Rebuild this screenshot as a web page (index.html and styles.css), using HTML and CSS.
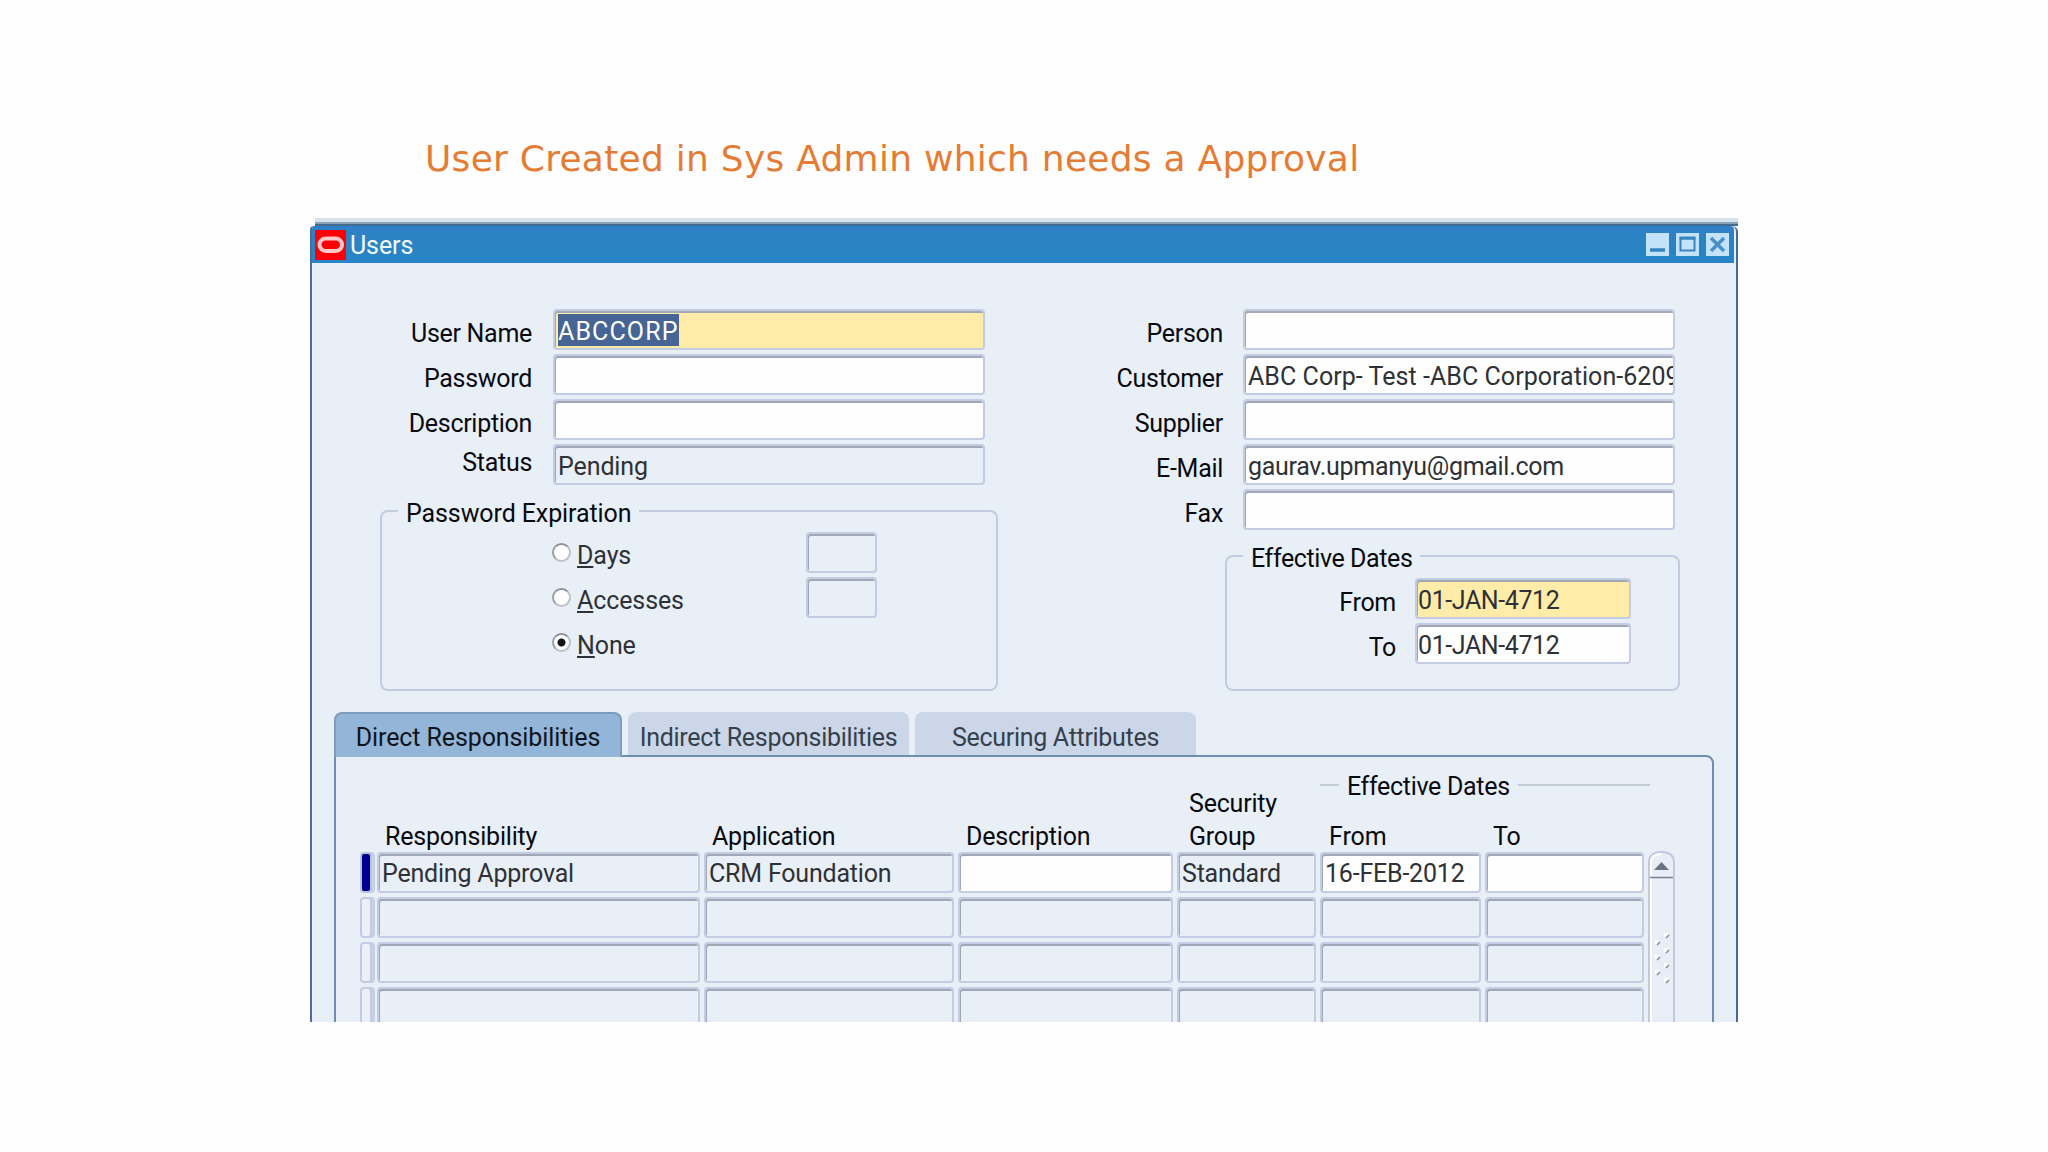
FILE: index.html
```html
<!DOCTYPE html>
<html lang="en">
<head>
    <meta charset="UTF-8">
    <meta name="viewport" content="width=device-width, initial-scale=1.0">
    <title>Users</title>
    <link rel="stylesheet" href="styles.css">
</head>
<body>

    <h1>User Created in Sys Admin which needs a Approval</h1>

    <div class="window">
        <div class="top-edge"></div>
        <div class="frame">
            <div class="title-bar">
                <svg class="logo" viewBox="0 0 31 30">
                    <rect width="31" height="30" fill="#fb0006" />
                    <rect x="4.500" y="8.500" width="22.500" height="12.500" rx="6.200" fill="none" stroke="#ffc9c9" stroke-width="4" />
                </svg>
                <span class="window-name">Users</span>
                <svg class="window-button" viewBox="0 0 23 23">
                    <rect width="23" height="23" fill="#c3e3fa" />
                    <path d="M4 17h15" stroke="#3a84bd" stroke-width="3.500" />
                </svg>
                <svg class="window-button" viewBox="0 0 23 23">
                    <rect width="23" height="23" fill="#c3e3fa" />
                    <path d="M4.500 5.500h14v12h-14z" fill="none" stroke="#3a84bd" stroke-width="2" />
                    <path d="M3.500 5h16" stroke="#3a84bd" stroke-width="3" />
                </svg>
                <svg class="window-button" viewBox="0 0 23 23">
                    <rect width="23" height="23" fill="#c3e3fa" />
                    <path d="M5 5l13 13M18 5L5 18" stroke="#4a90c8" stroke-width="3.500" />
                </svg>
            </div>

            <div class="content">
                <div class="form">
                    <div class="left-column">
                        <div class="row"><span class="label">User Name</span><div class="field required"><span class="selected">ABCCORP</span></div></div>
                        <div class="row"><span class="label">Password</span><div class="field"></div></div>
                        <div class="row"><span class="label">Description</span><div class="field"></div></div>
                        <div class="row"><span class="label status-label">Status</span><div class="field disabled">Pending</div></div>

                        <div class="group expiration">
                            <div class="legend"><span>Password Expiration</span></div>
                            <div class="option">
                                <span class="radio"></span><span class="option-name"><u>D</u>ays</span><div class="field disabled"></div>
                            </div>
                            <div class="option">
                                <span class="radio"></span><span class="option-name"><u>A</u>ccesses</span><div class="field disabled"></div>
                            </div>
                            <div class="option">
                                <span class="radio checked"></span><span class="option-name"><u>N</u>one</span>
                            </div>
                        </div>
                    </div>

                    <div class="right-column">
                        <div class="row"><span class="label">Person</span><div class="field"></div></div>
                        <div class="row"><span class="label">Customer</span><div class="field customer">ABC Corp- Test -ABC Corporation-6209</div></div>
                        <div class="row"><span class="label">Supplier</span><div class="field"></div></div>
                        <div class="row"><span class="label">E-Mail</span><div class="field email">gaurav.upmanyu@gmail.com</div></div>
                        <div class="row"><span class="label">Fax</span><div class="field"></div></div>

                        <div class="group dates">
                            <div class="legend"><span>Effective Dates</span></div>
                            <div class="row"><span class="label">From</span><div class="field required">01-JAN-4712</div></div>
                            <div class="row"><span class="label">To</span><div class="field">01-JAN-4712</div></div>
                        </div>
                    </div>
                </div>

                <div class="tabs">
                    <div class="tab active">Direct Responsibilities</div>
                    <div class="tab">Indirect Responsibilities</div>
                    <div class="tab">Securing Attributes</div>
                </div>

                <div class="panel">
                    <div class="headers">
                        <span class="header">Responsibility</span>
                        <span class="header">Application</span>
                        <span class="header">Description</span>
                        <span class="header">Security<br>Group</span>
                        <div class="header-dates">
                            <div class="dates-title">Effective Dates</div>
                            <div class="dates-names"><span>From</span><span>To</span></div>
                        </div>
                    </div>
                    <div class="table">
                        <div class="records">
                            <div class="marker current"></div>
                            <div class="field disabled">Pending Approval</div>
                            <div class="field disabled">CRM Foundation</div>
                            <div class="field"></div>
                            <div class="field disabled">Standard</div>
                            <div class="field">16-FEB-2012</div>
                            <div class="field"></div>

                            <div class="marker"></div>
                            <div class="field disabled"></div>
                            <div class="field disabled"></div>
                            <div class="field disabled"></div>
                            <div class="field disabled"></div>
                            <div class="field disabled"></div>
                            <div class="field disabled"></div>

                            <div class="marker"></div>
                            <div class="field disabled"></div>
                            <div class="field disabled"></div>
                            <div class="field disabled"></div>
                            <div class="field disabled"></div>
                            <div class="field disabled"></div>
                            <div class="field disabled"></div>

                            <div class="marker"></div>
                            <div class="field disabled"></div>
                            <div class="field disabled"></div>
                            <div class="field disabled"></div>
                            <div class="field disabled"></div>
                            <div class="field disabled"></div>
                            <div class="field disabled"></div>
                        </div>
                        <svg class="scrollbar" viewBox="0 0 27 180">
                            <path d="M1 180V12Q1 1 13.500 1T26 12V180" fill="#e9edf5" stroke="#c3c8e0" stroke-width="2" />
                            <path d="M3 180V12Q3 3 13 3" fill="none" stroke="#fff" stroke-width="2" />
                            <path d="M6 19L13.500 11L21 19z" fill="#6d7387" />
                            <path d="M2 26.500h23" stroke="#777d91" stroke-width="1.500" />
                            <g stroke="#fff" stroke-width="4">
                                <path d="M16 84h4M7 91h4M16 99h4M7 106h4M16 114h4M7 121h4M16 129h4" />
                            </g>
                            <g stroke="#858b9d" stroke-width="1.500">
                                <path d="M18 87l3-3M9 94l3-3M18 102l3-3M9 109l3-3M18 117l3-3M9 124l3-3M18 132l3-3" />
                            </g>
                        </svg>
                    </div>
                </div>
            </div>
        </div>
    </div>

</body>
</html>
```

FILE: styles.css
```css
* {
    box-sizing: border-box;
}
body {
    margin: 0;
    height: 1152px;
    overflow: hidden;
    background-color: #fefefe;
    font-family: Roboto, "Liberation Sans", sans-serif;
    font-size: 25px;
    letter-spacing: -0.1px;
    color: #080a10;
}
h1 {
    margin: 0 0 0 425px;
    padding-top: 137px;
    height: 218px;
    font-family: "DejaVu Sans", sans-serif;
    font-size: 36px;
    font-weight: normal;
    letter-spacing: 0.26px;
    line-height: 44px;
    white-space: nowrap;
    color: #e57c34;
}
.window {
    width: 1429px;
    height: 804px;
    margin-left: 309px;
    overflow: hidden;
}
.top-edge {
    height: 8px;
    margin-left: 6px;
    border-top: 4px solid #d6e3ed;
    border-bottom: 2px solid #426b91;
    background-color: #8ba3b7;
}
.frame {
    margin-left: 1px;
    border-left: 2px solid #4b6c9f;
    border-right: 2px solid #466b95;
    border-radius: 4px 6px 0 0;
    background-color: #e8eff7;
}
.title-bar {
    display: flex;
    align-items: center;
    gap: 7px;
    height: 37px;
    margin-right: 2px;
    padding: 0 5px 0 3px;
    background: linear-gradient(#2f80c8, #2b83c2 45%, #2785c8);
    border-radius: 3px 4px 0 0;
    color: #f2fbff;
}
.logo {
    width: 31px;
    height: 30px;
}
.window-name {
    flex: 1;
    margin-left: -3px;
    padding-top: 2px;
    line-height: 37px;
    letter-spacing: -0.1px;
}
.window-button {
    width: 23px;
    height: 23px;
}
.content {
    height: 759px;
    padding: 46px 23px 0 22px;
}

/* Form */
.form {
    display: flex;
    justify-content: space-between;
    height: 403px;
    padding: 0 33px 0 46px;
}
.left-column {
    width: 618px;
}
.right-column {
    width: 455px;
}
.row {
    display: flex;
    height: 45px;
}
.label {
    width: 152px;
    margin-right: 21px;
    line-height: 50px;
    letter-spacing: -0.3px;
    text-align: right;
    white-space: nowrap;
}
.left-column > .row .field {
    width: 432px;
}
.right-column > .row .label {
    margin-left: -154px;
    margin-right: 20px;
}
.right-column > .row .field {
    width: 432px;
}
.left-column .status-label {
    line-height: 37px;
}
.field {
    height: 41px;
    padding-left: 3px;
    overflow: hidden;
    border: 2px solid #c3cce3;
    border-radius: 4px;
    box-shadow: inset 1px 2px 0 #a0a8b6;
    background-color: #fefefe;
    line-height: 41px;
    white-space: nowrap;
    color: #2e3136;
}
.required {
    background-color: #feeca8;
}
.disabled {
    background-color: #e9eff7;
}
.customer {
    letter-spacing: 0.05px;
}
.email {
    letter-spacing: -0.3px;
}
.selected {
    display: inline-block;
    height: 32px;
    margin-top: 3px;
    line-height: 35px;
    letter-spacing: 1.1px;
    background-color: #466494;
    color: #fff;
    vertical-align: top;
}
.group {
    border: 2px solid #c3cbdf;
    border-radius: 8px;
}
.legend {
    height: 20px;
    padding-left: 16px;
    line-height: 29px;
}
.legend span {
    display: inline-block;
    padding: 0 8px;
    margin-top: -13px;
    background-color: #e8eff7;
    letter-spacing: -0.1px;
    vertical-align: top;
}
.expiration {
    height: 181px;
    margin-top: 21px;
}
.dates {
    height: 136px;
    margin-top: 21px;
}
.dates .legend {
    height: 21px;
}
.dates .legend span {
    letter-spacing: -0.4px;
}
.dates .label {
    width: 169px;
    margin-right: 19px;
}
.dates .field {
    width: 216px;
    padding-left: 1px;
    line-height: 42px;
    letter-spacing: -0.4px;
}
.option {
    display: flex;
    align-items: flex-start;
    height: 45px;
    padding-left: 170px;
    color: #2e3136;
}
.radio {
    width: 19px;
    height: 19px;
    margin-top: 11px;
    border: 2px solid #bcc2cc;
    border-top-color: #8c929c;
    border-left-color: #9aa0aa;
    border-radius: 50%;
    background-color: #fff;
}
.checked {
    background: radial-gradient(circle, #15171f 3.500px, #fff 4.500px);
}
.option-name {
    width: 229px;
    margin-left: 6px;
    line-height: 48px;
}
.option-name u {
    text-decoration-thickness: 2px;
    text-underline-offset: 2px;
}
.option .field {
    width: 71px;
}

/* Tabs */
.tabs {
    display: flex;
    gap: 6px;
    height: 43px;
}
.tab {
    width: 281px;
    border-radius: 8px 8px 0 0;
    background-color: #cbd7e9;
    line-height: 52px;
    letter-spacing: -0.3px;
    text-align: center;
    white-space: nowrap;
    color: #363f4c;
}
.active {
    position: relative;
    z-index: 1;
    width: 288px;
    height: 45px;
    border: 2px solid #7d9bbb;
    border-bottom: none;
    background-color: #93b5d8;
    line-height: 48px;
    letter-spacing: -0.1px;
    color: #10151d;
}
.panel {
    width: 1380px;
    height: 300px;
    border: 2px solid #6f8eb4;
    border-top-right-radius: 8px;
    padding: 19px 0 0 24px;
}
.headers {
    display: grid;
    grid-template-columns: 327px 254px 223px 131px 330px;
    align-items: end;
    height: 76px;
    padding-left: 25px;
}
.header {
    line-height: 33px;
    letter-spacing: -0.2px;
    margin-bottom: -1px;
}
.header-dates {
    height: 76px;
}
.dates-title {
    display: flex;
    align-items: center;
    gap: 8px;
    height: 22px;
    line-height: 22px;
    letter-spacing: -0.3px;
    white-space: nowrap;
}
.dates-title::before,
.dates-title::after {
    content: "";
    width: 19px;
    height: 2px;
    margin-top: -5px;
    background-color: #c3cbd6;
}
.dates-title::after {
    width: 133px;
}
.dates-names {
    display: grid;
    grid-template-columns: 164px 100px;
    padding: 22px 0 0 9px;
    line-height: 33px;
}
.table {
    display: flex;
    gap: 4px;
}
.records {
    display: grid;
    grid-template-columns: 13px 323px 250px 215px 139px 161px 159px;
    grid-auto-rows: 41px;
    gap: 4px;
}
.records .field {
    line-height: 40px;
    letter-spacing: -0.2px;
}
.marker {
    margin-right: 1px;
    border: 2px solid #c3cbe2;
    border-radius: 4px;
    background-color: #edf0f7;
    box-shadow: 3px 0 0 #c5d1e6;
}
.current {
    border-color: #b9c3e2;
    background-color: #00008c;
}
.scrollbar {
    width: 27px;
    height: 180px;
    margin-top: -1px;
}
```
